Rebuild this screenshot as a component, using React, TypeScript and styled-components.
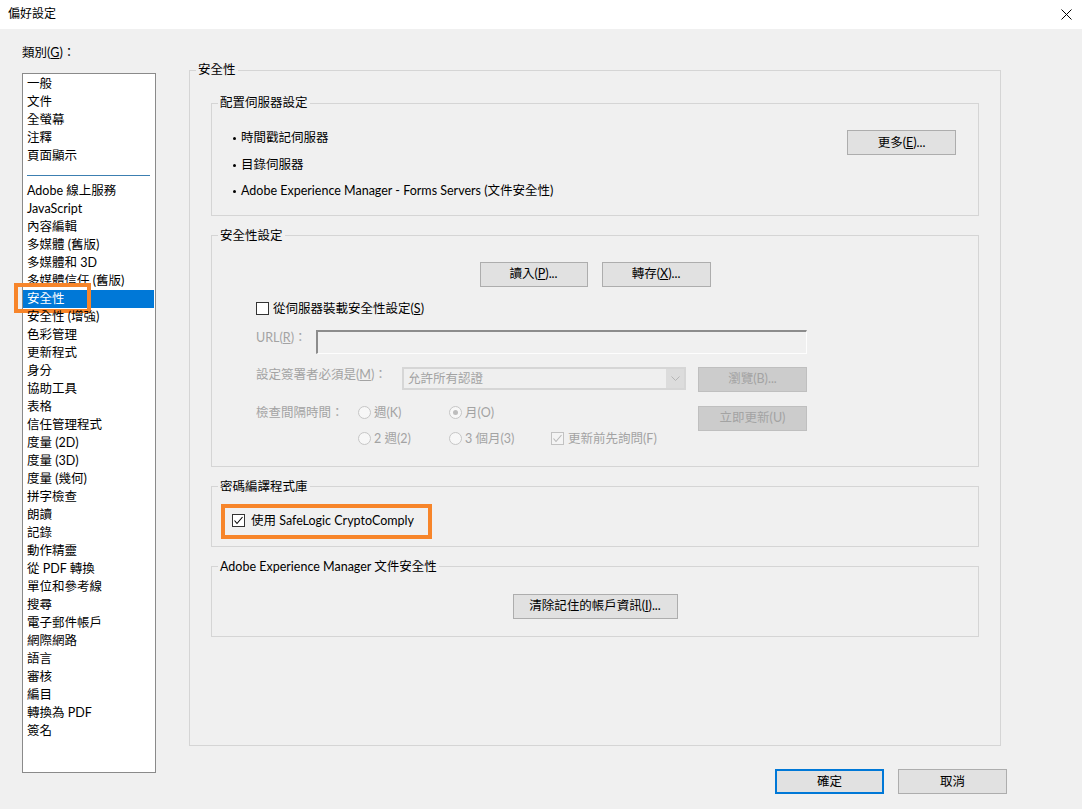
import React from "react";
import styled, { createGlobalStyle } from "styled-components";

const GlobalStyle = createGlobalStyle`
  html, body {
    margin: 0;
    padding: 0;
  }
  body {
    font-family: "Lato", "Noto Sans CJK TC", "Noto Sans", sans-serif;
    font-size: 12.5px;
    color: #000;
    background: #f0f0f0;
  }
  *, *::before, *::after {
    box-sizing: border-box;
  }
`;

// ウィンドウ全体
const Window = styled.div`
  width: 1082px;
  height: 809px;
  display: flex;
  flex-direction: column;
  background: #f0f0f0;
  overflow: hidden;
`;

const TitleBar = styled.div`
  height: 29px;
  flex-shrink: 0;
  background: #fff;
  display: flex;
  align-items: center;
  justify-content: space-between;
  padding: 0 10px 1px 8px;
  font-size: 12px;
  line-height: 16px;
`;

const Body = styled.div`
  flex: 1;
  display: flex;
  padding-left: 22px;
  gap: 33px;
`;

// 左側の類別リスト
const Sidebar = styled.div`
  width: 134px;
  display: flex;
  flex-direction: column;
  padding-top: 15px;
`;

const CategoryLabel = styled.div`
  line-height: 18px;
  margin-bottom: 11px;
`;

const ListBox = styled.div`
  height: 700px;
  background: #fff;
  border: 1px solid #8a8a8a;
  padding-top: 1px;
`;

const ListItem = styled.div<{ $selected?: boolean }>`
  position: relative;
  height: 18px;
  line-height: 18px;
  padding-left: 4px;
  margin-right: 1px;
  white-space: nowrap;
  background: ${(p) => (p.$selected ? "#0078d7" : "transparent")};
  color: ${(p) => (p.$selected ? "#fff" : "#000")};
  ${(p) =>
    p.$selected &&
    `
    &::after {
      content: "";
      position: absolute;
      left: -9px;
      top: -7px;
      width: 77px;
      height: 30px;
      border: 4px solid #f7852a;
    }
  `}
`;

const ListSeparator = styled.div`
  height: 1px;
  margin: 10px 5px 6px 4px;
  background: #3c7fb1;
`;

// 右側
const Main = styled.div`
  width: 818px;
  display: flex;
  flex-direction: column;
  padding-top: 33px;
`;

const Group = styled.fieldset<{ $height?: number; $width?: number }>`
  margin: 0;
  padding: 0;
  min-width: 0;
  border: 1px solid #d5d5d5;
  ${(p) => (p.$height ? `height: ${p.$height}px;` : "")}
  ${(p) => (p.$width ? `width: ${p.$width}px;` : "")}
`;

const Legend = styled.legend`
  padding: 0 2px;
  margin-left: 6px;
  line-height: 16px;
`;

const OuterContent = styled.div`
  display: flex;
  flex-direction: column;
  gap: 12px;
  padding: 17px 21px 0 21px;
`;

const ServerBody = styled.div`
  display: flex;
  justify-content: space-between;
  align-items: flex-start;
  padding: 14px 22px 10px 21px;
`;

const BulletList = styled.ul`
  list-style: none;
  margin: 0;
  padding: 0;
  line-height: 26.5px;
`;

const Bullet = styled.li`
  display: flex;
  align-items: center;
  white-space: nowrap;
  &::before {
    content: "";
    width: 3px;
    height: 3px;
    border-radius: 50%;
    background: #000;
    margin: 1px 5px 0 0;
  }
`;

const SettingsBody = styled.div`
  display: flex;
  flex-direction: column;
  padding: 18px 0 14px 0;
`;

const ButtonRow = styled.div`
  display: flex;
  justify-content: center;
  gap: 14px;
`;

const CheckRow = styled.label<{ $disabled?: boolean }>`
  display: flex;
  align-items: center;
  gap: 4px;
  height: 18px;
  line-height: 16px;
  color: ${(p) => (p.$disabled ? "#a3a3a3" : "#000")};
  white-space: nowrap;
`;

const IndentRow = styled.div<{ $top: number }>`
  display: flex;
  align-items: flex-start;
  margin-top: ${(p) => p.$top}px;
  padding-left: 44px;
`;

const FieldLabel = styled.span<{ $width: number }>`
  width: ${(p) => p.$width}px;
  flex-shrink: 0;
  line-height: 16px;
  color: #a3a3a3;
  white-space: nowrap;
`;

const TextInput = styled.div`
  width: 491px;
  height: 24px;
  border-style: solid;
  border-width: 2px 1px 1px 2px;
  border-color: #8c8c8c #fdfdfd #fdfdfd #8c8c8c;
  background: #f0f0f0;
`;

const Select = styled.div`
  width: 284px;
  height: 23px;
  display: flex;
  border: 2px solid #d6d6d6;
  background: #dcdcdc;
  margin-right: 12px;
`;

const SelectValue = styled.div`
  flex: 1;
  background: #efefef;
  color: #a3a3a3;
  line-height: 19px;
  padding-left: 4px;
`;

const SelectArrow = styled.div`
  width: 18px;
  display: flex;
  align-items: center;
  justify-content: center;
`;

const IntervalGrid = styled.div`
  display: grid;
  grid-template-columns: 102px 91px 102px 147px 109px;
  grid-template-rows: 26px 26px;
  margin-top: 8px;
  margin-left: 44px;
  align-items: center;
`;

const RadioItem = styled.span`
  display: flex;
  align-items: center;
  gap: 3px;
  color: #a3a3a3;
  line-height: 16px;
  white-space: nowrap;
`;

const RadioCircle = styled.span<{ $checked?: boolean }>`
  width: 13px;
  height: 13px;
  border-radius: 50%;
  border: 1px solid #c6c6c6;
  background: #f7f7f7;
  display: flex;
  align-items: center;
  justify-content: center;
  &::after {
    content: "";
    width: 5px;
    height: 5px;
    border-radius: 50%;
    background: ${(p) => (p.$checked ? "#bdbdbd" : "transparent")};
  }
`;

const Box = styled.span<{ $disabled?: boolean }>`
  width: 13px;
  height: 13px;
  flex-shrink: 0;
  border: 1px solid ${(p) => (p.$disabled ? "#c2c2c2" : "#333")};
  background: ${(p) => (p.$disabled ? "#f4f4f4" : "#fff")};
  display: flex;
  align-items: center;
  justify-content: center;
`;

const CryptoBody = styled.div`
  padding: 18px 0 17px 20px;
`;

const HighlightRow = styled(CheckRow)`
  position: relative;
  gap: 6px;
  height: 16px;
  width: fit-content;
  &::after {
    content: "";
    position: absolute;
    left: -11px;
    top: -9px;
    width: 211px;
    height: 35px;
    border: 4px solid #f7852a;
  }
`;

const AemBody = styled.div`
  display: flex;
  justify-content: center;
  padding: 19px 0 17px 0;
`;

const Button = styled.button<{ $width?: number; $primary?: boolean }>`
  width: ${(p) => p.$width ?? 108}px;
  height: 25px;
  flex-shrink: 0;
  padding: 0;
  font-family: inherit;
  font-size: 12.5px;
  line-height: 16px;
  color: #000;
  background: #e1e1e1;
  border: ${(p) => (p.$primary ? "2px solid #0078d7" : "1px solid #adadad")};
  &:disabled {
    background: #cccccc;
    border-color: #bfbfbf;
    color: #a3a3a3;
  }
`;

const Footer = styled.div`
  display: flex;
  justify-content: flex-end;
  gap: 14px;
  margin-top: 23px;
`;

const Check = ({ color }: { color: string }) => (
  <svg width="11" height="11" viewBox="0 0 11 11">
    <polyline points="1.5,5.5 4,8.5 9.5,2" fill="none" stroke={color} strokeWidth="1.1" />
  </svg>
);

const categoriesTop = ["一般", "文件", "全螢幕", "注釋", "頁面顯示"];
const categories = [
  "Adobe 線上服務",
  "JavaScript",
  "內容編輯",
  "多媒體 (舊版)",
  "多媒體和 3D",
  "多媒體信任 (舊版)",
  "安全性",
  "安全性 (增強)",
  "色彩管理",
  "更新程式",
  "身分",
  "協助工具",
  "表格",
  "信任管理程式",
  "度量 (2D)",
  "度量 (3D)",
  "度量 (幾何)",
  "拼字檢查",
  "朗讀",
  "記錄",
  "動作精靈",
  "從 PDF 轉換",
  "單位和參考線",
  "搜尋",
  "電子郵件帳戶",
  "網際網路",
  "語言",
  "審核",
  "編目",
  "轉換為 PDF",
  "簽名",
];

const App = () => {
  return (
    <Window>
      <GlobalStyle />
      <TitleBar>
        <span>偏好設定</span>
        <svg width="11" height="11" viewBox="0 0 11 11">
          <line x1="0.5" y1="0.5" x2="10.5" y2="10.5" stroke="#000" strokeWidth="1" />
          <line x1="10.5" y1="0.5" x2="0.5" y2="10.5" stroke="#000" strokeWidth="1" />
        </svg>
      </TitleBar>
      <Body>
        <Sidebar>
          <CategoryLabel>
            類別(<u>G</u>)：
          </CategoryLabel>
          <ListBox>
            {categoriesTop.map((name) => (
              <ListItem key={name}>{name}</ListItem>
            ))}
            <ListSeparator />
            {categories.map((name) => (
              <ListItem key={name} $selected={name === "安全性"}>
                {name}
              </ListItem>
            ))}
          </ListBox>
        </Sidebar>
        <Main>
          <Group $height={684} $width={812}>
            <Legend>安全性</Legend>
            <OuterContent>
              <Group>
                <Legend>配置伺服器設定</Legend>
                <ServerBody>
                  <BulletList>
                    <Bullet>時間戳記伺服器</Bullet>
                    <Bullet>目錄伺服器</Bullet>
                    <Bullet>Adobe Experience Manager - Forms Servers (文件安全性)</Bullet>
                  </BulletList>
                  <Button $width={109} style={{ marginTop: 5 }}>
                    更多(<u>E</u>)...
                  </Button>
                </ServerBody>
              </Group>

              <Group>
                <Legend>安全性設定</Legend>
                <SettingsBody>
                  <ButtonRow>
                    <Button>
                      讀入(<u>P</u>)...
                    </Button>
                    <Button $width={109}>
                      轉存(<u>X</u>)...
                    </Button>
                  </ButtonRow>
                  <IndentRow $top={13}>
                    <CheckRow>
                      <Box />
                      <span>
                        從伺服器裝載安全性設定(<u>S</u>)
                      </span>
                    </CheckRow>
                  </IndentRow>
                  <IndentRow $top={12}>
                    <FieldLabel $width={60}>
                      URL(<u>R</u>)：
                    </FieldLabel>
                    <TextInput />
                  </IndentRow>
                  <IndentRow $top={13}>
                    <FieldLabel $width={146}>
                      設定簽署者必須是(<u>M</u>)：
                    </FieldLabel>
                    <Select>
                      <SelectValue>允許所有認證</SelectValue>
                      <SelectArrow>
                        <svg width="9" height="5" viewBox="0 0 9 5">
                          <polyline points="0.5,0.5 4.5,4.5 8.5,0.5" fill="none" stroke="#b5b5b5" strokeWidth="1" />
                        </svg>
                      </SelectArrow>
                    </Select>
                    <Button $width={109} disabled>
                      瀏覽(B)...
                    </Button>
                  </IndentRow>
                  <IntervalGrid>
                    <FieldLabel $width={102}>檢查間隔時間：</FieldLabel>
                    <RadioItem>
                      <RadioCircle />
                      週(K)
                    </RadioItem>
                    <RadioItem>
                      <RadioCircle $checked />
                      月(O)
                    </RadioItem>
                    <span />
                    <Button $width={109} disabled style={{ alignSelf: "start", marginTop: 6 }}>
                      立即更新(U)
                    </Button>
                    <span />
                    <RadioItem>
                      <RadioCircle />2 週(2)
                    </RadioItem>
                    <RadioItem>
                      <RadioCircle />3 個月(3)
                    </RadioItem>
                    <CheckRow $disabled>
                      <Box $disabled>
                        <Check color="#b8b8b8" />
                      </Box>
                      <span>更新前先詢問(F)</span>
                    </CheckRow>
                  </IntervalGrid>
                </SettingsBody>
              </Group>

              <Group>
                <Legend>密碼編譯程式庫</Legend>
                <CryptoBody>
                  <HighlightRow>
                    <Box>
                      <Check color="#000" />
                    </Box>
                    <span>使用 SafeLogic CryptoComply</span>
                  </HighlightRow>
                </CryptoBody>
              </Group>

              <Group>
                <Legend>Adobe Experience Manager 文件安全性</Legend>
                <AemBody>
                  <Button $width={165}>
                    清除記住的帳戶資訊(<u>I</u>)...
                  </Button>
                </AemBody>
              </Group>
            </OuterContent>
          </Group>
          <Footer>
            <Button $width={109} $primary>
              確定
            </Button>
            <Button $width={109}>取消</Button>
          </Footer>
        </Main>
      </Body>
    </Window>
  );
};

export default App;
